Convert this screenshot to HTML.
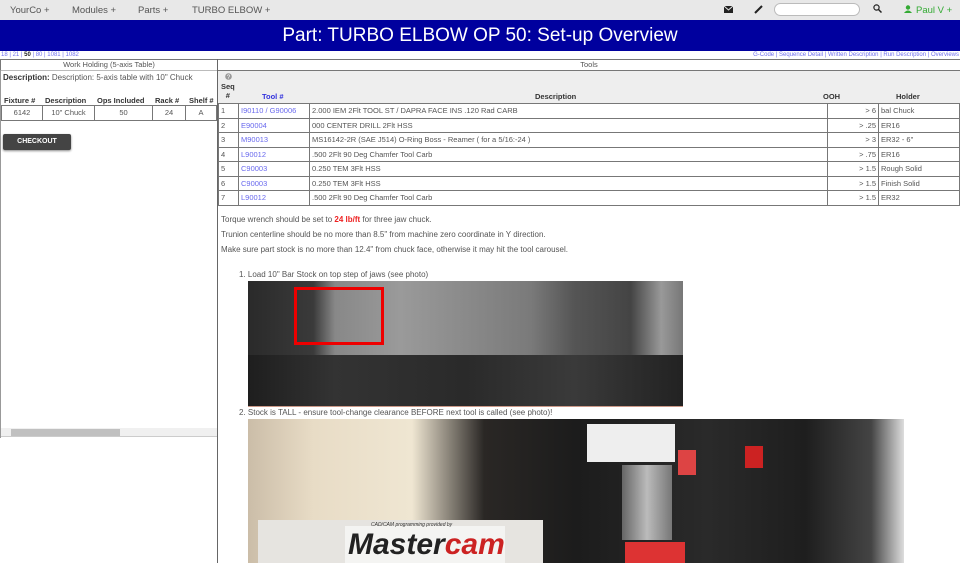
<!DOCTYPE html>
<html><head><meta charset="utf-8"><style>
*{box-sizing:border-box;margin:0;padding:0}
body{width:960px;height:563px;overflow:hidden;background:#fff;font-family:"Liberation Sans",sans-serif;color:#555;font-size:8px;position:relative}
.a{position:absolute}
.nav{left:0;top:0;width:960px;height:20px;background:#e8e8e8;font-size:9.5px;color:#555}
.nav span{position:absolute;top:5px}
.ban{left:0;top:20px;width:960px;height:31px;background:#00009e;color:#fff;font-size:19px;text-align:center;line-height:31px}
.lk{color:#7070ee;font-size:6px}
table{border-collapse:collapse}
.tt td{border:1px solid #777;height:14.5px;font-size:7.5px;padding:0 2px;white-space:nowrap}
.b{color:#6a6aee}
.p{font-size:8px;white-space:nowrap}
</style></head><body>
<div class="a nav">
<span style="left:10px">YourCo +</span><span style="left:72px">Modules +</span><span style="left:138px">Parts +</span><span style="left:192px">TURBO ELBOW +</span>
<svg class="a" style="left:724px;top:6px" width="9" height="7"><rect width="9" height="7" fill="#222"/><path d="M0 0L4.5 4L9 0" stroke="#e8e8e8" fill="none"/></svg>
<svg class="a" style="left:754px;top:5px" width="9" height="9"><path d="M1 8L8 1" stroke="#222" stroke-width="2"/></svg>
<div class="a" style="left:774px;top:3px;width:86px;height:13px;background:#fff;border:1px solid #bbb;border-radius:7px"></div>
<svg class="a" style="left:873px;top:4px" width="9" height="9"><circle cx="3.5" cy="3.5" r="2.6" stroke="#222" fill="none" stroke-width="1.2"/><path d="M5.5 5.5L8.5 8.5" stroke="#222" stroke-width="1.5"/></svg>
<svg class="a" style="left:904px;top:5px" width="8" height="8"><circle cx="4" cy="2.5" r="2.2" fill="#3a3"/><path d="M0 8Q4 3 8 8Z" fill="#3a3"/></svg>
<span style="left:916px;color:#3a3">Paul V +</span>
</div>
<div class="a ban">Part: TURBO ELBOW OP 50: Set-up Overview</div>
<div class="a lk" style="left:1px;top:52px">18 | 21 | <b style="color:#222">50</b> | 80 | 1081 | 1082</div>
<div class="a lk" style="right:1px;top:52px">G-Code | Sequence Detail | Written Description | Run Description | Overviews</div>
<div class="a" style="left:0;top:59px;width:218px;height:12px;border:1px solid #777;border-bottom:1px solid #bbb;text-align:center;font-size:7.5px;line-height:10px">Work Holding (5-axis Table)</div>
<div class="a" style="left:0;top:71px;width:1px;height:367px;background:#999"></div>
<div class="a" style="left:217px;top:59px;width:1px;height:504px;background:#666"></div>
<div class="a p" style="left:3px;top:73px"><b style="color:#333">Description:</b> Description: 5-axis table with 10" Chuck</div>
<div class="a" style="left:4px;top:96px;font-size:7.5px;font-weight:bold;color:#333">
<span class="a" style="left:0;white-space:nowrap">Fixture&nbsp;#</span><span class="a" style="left:41px">Description</span><span class="a" style="left:93px;white-space:nowrap">Ops&nbsp;Included</span><span class="a" style="left:151px;white-space:nowrap">Rack&nbsp;#</span><span class="a" style="left:185px;white-space:nowrap">Shelf&nbsp;#</span></div>
<table class="a tt" style="left:1px;top:105px;width:216px;text-align:center">
<tr><td style="width:41px">6142</td><td style="width:52px">10" Chuck</td><td style="width:58px">50</td><td style="width:33px">24</td><td>A</td></tr></table>
<div class="a" style="left:3px;top:134px;width:68px;height:16px;background:#444;color:#fff;font-weight:bold;font-size:7px;text-align:center;line-height:16px;border-radius:2px;box-shadow:0 1px 2px #888">CHECKOUT</div>
<div class="a" style="left:1px;top:428px;width:216px;height:9px;background:#f0f0f0;border-bottom:1px solid #ccc"></div>
<div class="a" style="left:11px;top:429px;width:109px;height:7px;background:#c0c0c0"></div>
<div class="a" style="left:218px;top:59px;width:742px;height:12px;border-top:1px solid #777;border-bottom:1px solid #777;text-align:center;font-size:7.5px;line-height:10px">Tools</div>
<div class="a" style="left:218px;top:71px;width:742px;height:32px;background:#eeeeee"></div>
<svg class="a" style="left:225px;top:73px" width="7" height="7"><circle cx="3.5" cy="3.5" r="3.3" fill="#999"/><text x="3.5" y="6" font-size="6" fill="#fff" text-anchor="middle" font-family="Liberation Sans">?</text></svg>
<div class="a" style="left:221px;top:82px;font-size:7.5px;font-weight:bold;color:#333;text-align:center;line-height:9px">Seq<br>#</div>
<div class="a" style="left:262px;top:92px;font-size:7.5px;font-weight:bold;color:#3333dd">Tool #</div>
<div class="a" style="left:535px;top:92px;font-size:7.5px;font-weight:bold;color:#333">Description</div>
<div class="a" style="left:823px;top:92px;font-size:7.5px;font-weight:bold;color:#333">OOH</div>
<div class="a" style="left:896px;top:92px;font-size:7.5px;font-weight:bold;color:#333">Holder</div>
<table class="a tt" style="left:218px;top:103px;width:742px">
<tr><td style="width:20px">1</td><td class="b" style="width:71px">I90110 / G90006</td><td style="width:518px">2.000 IEM 2Flt TOOL ST / DAPRA FACE INS .120 Rad CARB</td><td style="width:51px;text-align:right">&gt; 6</td><td>bal Chuck</td></tr>
<tr><td>2</td><td class="b">E90004</td><td>000 CENTER DRILL 2Flt HSS</td><td style="text-align:right">&gt; .25</td><td>ER16</td></tr>
<tr><td>3</td><td class="b">M90013</td><td>MS16142-2R (SAE J514) O-Ring Boss - Reamer ( for a 5/16:-24 )</td><td style="text-align:right">&gt; 3</td><td>ER32 - 6"</td></tr>
<tr><td>4</td><td class="b">L90012</td><td>.500 2Flt 90 Deg Chamfer Tool Carb</td><td style="text-align:right">&gt; .75</td><td>ER16</td></tr>
<tr><td>5</td><td class="b">C90003</td><td>0.250 TEM 3Flt HSS</td><td style="text-align:right">&gt; 1.5</td><td>Rough Solid</td></tr>
<tr><td>6</td><td class="b">C90003</td><td>0.250 TEM 3Flt HSS</td><td style="text-align:right">&gt; 1.5</td><td>Finish Solid</td></tr>
<tr><td>7</td><td class="b">L90012</td><td>.500 2Flt 90 Deg Chamfer Tool Carb</td><td style="text-align:right">&gt; 1.5</td><td>ER32</td></tr>
</table>
<div class="a p" style="left:221px;top:215px">Torque wrench should be set to <b style="color:#e22">24 lb/ft</b> for three jaw chuck.</div>
<div class="a p" style="left:221px;top:230px">Trunion centerline should be no more than 8.5" from machine zero coordinate in Y direction.</div>
<div class="a p" style="left:221px;top:245px">Make sure part stock is no more than 12.4" from chuck face, otherwise it may hit the tool carousel.</div>
<div class="a p" style="left:239px;top:270px">1. Load 10" Bar Stock on top step of jaws (see photo)</div>
<div class="a" style="left:248px;top:281px;width:435px;height:126px;background:linear-gradient(90deg,#2a2a2a 0%,#3a3a3a 15%,#888 20%,#9a9a9a 35%,#7a7a7a 65%,#555 75%,#444 88%,#999 95%,#777 100%);border-bottom:2px solid #c98"></div>
<div class="a" style="left:248px;top:355px;width:435px;height:51px;background:linear-gradient(90deg,#1e1e1e 0%,#333 20%,#2a2a2a 50%,#3a3a3a 75%,#222 100%)"></div>
<div class="a" style="left:294px;top:287px;width:90px;height:58px;border:3px solid #e00"></div>
<div class="a p" style="left:239px;top:408px">2. Stock is TALL - ensure tool-change clearance BEFORE next tool is called (see photo)!</div>
<div class="a" style="left:248px;top:419px;width:656px;height:144px;background:linear-gradient(90deg,#cbbda8 0%,#e8dcc6 10%,#efe6d2 25%,#2a2725 36%,#1c1c1c 50%,#2a2a2a 70%,#1e1e1e 85%,#444 95%,#ddd 100%)"></div>
<div class="a" style="left:258px;top:520px;width:285px;height:43px;background:#e6e4e0"></div>
<div class="a" style="left:345px;top:526px;width:160px;height:37px;background:#f4f4f2;color:#222;font-style:italic;font-weight:bold;font-size:30px;line-height:37px;padding-left:3px;overflow:hidden">Master<span style="color:#c22">cam</span></div>
<div class="a" style="left:371px;top:522px;font-size:5px;color:#333;font-style:italic">CAD/CAM programming provided by</div>
<div class="a" style="left:587px;top:424px;width:88px;height:38px;background:#eee"></div>
<div class="a" style="left:622px;top:465px;width:50px;height:75px;background:linear-gradient(90deg,#666,#bbb,#777)"></div>
<div class="a" style="left:625px;top:542px;width:60px;height:21px;background:#d33"></div>
<div class="a" style="left:678px;top:450px;width:18px;height:25px;background:#d44"></div>
<div class="a" style="left:745px;top:446px;width:18px;height:22px;background:#c22"></div>
</body></html>
